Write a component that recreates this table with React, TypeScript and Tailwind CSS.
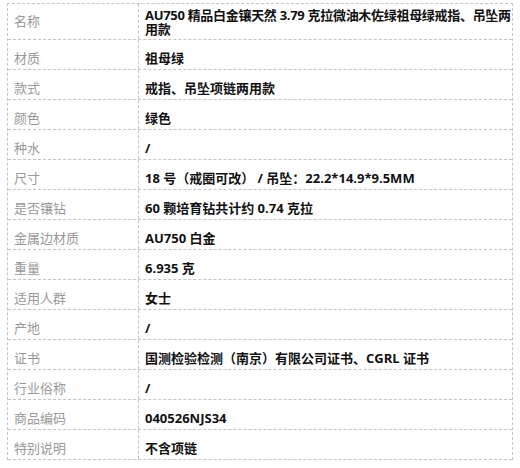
const rows: [string, string][] = [
  ["材质", "祖母绿"],
  ["款式", "戒指、吊坠项链两用款"],
  ["颜色", "绿色"],
  ["种水", "/"],
  ["尺寸", "18 号（戒圈可改） / 吊坠：22.2*14.9*9.5MM"],
  ["是否镶钻", "60 颗培育钻共计约 0.74 克拉"],
  ["金属边材质", "AU750 白金"],
  ["重量", "6.935 克"],
  ["适用人群", "女士"],
  ["产地", "/"],
  ["证书", "国测检验检测（南京）有限公司证书、CGRL 证书"],
  ["行业俗称", "/"],
  ["商品编码", "040526NJS34"],
  ["特别说明", "不含项链"],
];

export default function App() {
  return (
    <div
      className="h-[468px] w-[520px] bg-white pl-[7px] pt-[3px]"
      style={{ fontFamily: '"Open Sans", "Noto Sans CJK SC", sans-serif' }}
    >
      <div className="w-[506px] border-l border-t border-r border-dashed border-[#c4c4c4] text-[13px] leading-[13px]">
        <div className="flex h-[36px] border-b border-dashed border-[#c4c4c4]">
          <div className="flex w-[131px] shrink-0 items-center border-r border-dashed border-[#c4c4c4] pl-[6px] text-[#999]">
            名称
          </div>
          <div className="flex items-center pl-[6px] font-bold leading-[14px] text-[#111]">
            <div className="whitespace-nowrap tracking-[-0.3px]">
              AU750 精品白金镶天然 3.79 克拉微油木佐绿祖母绿戒指、吊坠两
              <br />
              用款
            </div>
          </div>
        </div>
        {rows.map(([label, value]) => (
          <div key={label} className="flex h-[30px] border-b border-dashed border-[#c4c4c4]">
            <div className="flex w-[131px] shrink-0 items-center border-r border-dashed border-[#c4c4c4] pl-[6px] pt-[7px] text-[#999]">
              {label}
            </div>
            <div className="flex items-center whitespace-nowrap pl-[6px] pt-[7px] font-bold text-[#111]">
              {value}
            </div>
          </div>
        ))}
      </div>
    </div>
  );
}
